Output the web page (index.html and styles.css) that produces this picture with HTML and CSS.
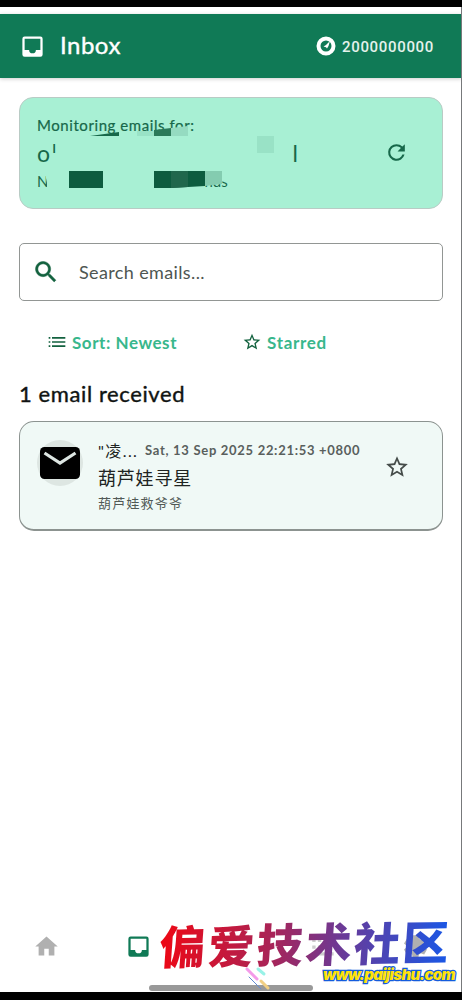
FILE: index.html
```html
<!DOCTYPE html>
<html lang="en">
<head>
<meta charset="utf-8">
<title>Inbox</title>
<link rel="stylesheet" href="styles.css">
</head>
<body>
<div class="screen">
  <header class="bar">
    <svg class="bar-icon" viewBox="0 0 24 24"><path d="M19 3H5a2 2 0 0 0-2 2v14a2 2 0 0 0 2 2h14a2 2 0 0 0 2-2V5a2 2 0 0 0-2-2zm0 12h-4a3 3 0 0 1-6 0H5V5h14z"/></svg>
    <h1 class="bar-title">Inbox</h1>
    <svg class="coin" viewBox="0 0 20 20"><circle cx="10" cy="10" r="7.500" fill="none" stroke="#fff" stroke-width="4"/><path d="M7.500 10.500l2.500-1.500 4-4-1.500 5-1.500 2.500-1-1.200z"/></svg>
    <span class="credits">2000000000</span>
  </header>
  <main class="content">
    <section class="monitor">
      <div class="monitor-text">
        <div class="m-label">Monitoring emails for:</div>
        <div class="m-mail"><span>o<sup>ı</sup></span><span class="m-end">l</span></div>
        <div class="m-note"><span>N</span><span class="m-tail">nds</span></div>
      </div>
      <svg class="refresh" viewBox="0 0 24 24"><path d="M17.650 6.350A7.960 7.960 0 0 0 12 4a8 8 0 1 0 7.730 10h-2.080A6 6 0 1 1 12 6c1.660 0 3.140.69 4.220 1.780L13 11h7V4z"/></svg>
      <svg class="mosaic" viewBox="0 0 424 112">
        <path fill="#a8f0d4" d="M26 76l2 10v5h7V74h-9zM156 78h54v6l-54 5z"/>
        <path fill="#17684a" d="M71 39l29-4v4z"/>
        <path fill="#99e2c6" d="M118 34h17v5h-17zM238 39h17v17h-17z"/>
        <path fill="#2b7959" d="M135 33l17-2v8h-17z"/>
        <path fill="#95dbc1" d="M152 31l17-2v10h-17z"/>
        <path fill="#0d5c3f" d="M50 74h34v17H50zM135 74h51v15l-34 2h-17z"/>
        <path fill="#20674c" d="M152 74h17v16l-17 1z"/>
        <path fill="#84ccb0" d="M186 74h17v13l-17 2z"/>
      </svg>
    </section>
    <div class="search">
      <svg class="search-icon" viewBox="0 0 24 24"><path d="M15.500 14h-.79l-.28-.27A6.500 6.500 0 1 0 13.730 14.430l.27.28v.79l5 4.990L20.490 19zM9.500 14a4.500 4.500 0 1 1 0-9 4.500 4.500 0 0 1 0 9z"/></svg>
      <span class="search-text">Search emails...</span>
    </div>
    <div class="filters">
      <div class="filter sort"><svg viewBox="0 0 24 24"><path d="M2 16h2v2H2zm0-5h2v2H2zm0-5h2v2H2zm4 0h16v2H6zm0 5h16v2H6zm0 5h16v2H6z"/></svg><span class="sort-text">Sort: Newest</span></div>
      <div class="filter"><svg viewBox="0 0 24 24"><path d="M22 9.240l-7.190-.62L12 2 9.190 8.630 2 9.240l5.460 4.730L5.820 21 12 17.270 18.180 21l-1.630-7.030zM12 15.400l-3.760 2.270 1-4.280-3.320-2.880 4.380-.38L12 6.100l1.710 4.040 4.380.38-3.320 2.880 1 4.280z"/></svg><span class="star-text">Starred</span></div>
    </div>
    <h2 class="count">1 email received</h2>
    <article class="email">
      <div class="avatar"><svg viewBox="0 0 40 32"><rect width="40" height="32" rx="4.500"/><path fill="none" stroke="#dde6e2" stroke-width="3.200" d="M4.500 6L20 16 35.500 6"/></svg></div>
      <div class="email-body">
        <div class="meta"><span class="from">"凌...</span><time class="date">Sat, 13 Sep 2025 22:21:53 +0800</time></div>
        <div class="subject">葫芦娃寻星</div>
        <div class="preview">葫芦娃救爷爷</div>
      </div>
      <svg class="star" viewBox="0 0 24 24"><path d="M22 9.240l-7.190-.62L12 2 9.190 8.630 2 9.240l5.460 4.730L5.820 21 12 17.270 18.180 21l-1.630-7.030zM12 15.400l-3.760 2.270 1-4.280-3.320-2.880 4.380-.38L12 6.100l1.710 4.040 4.380.38-3.320 2.880 1 4.280z"/></svg>
    </article>
  </main>
  <nav class="nav">
    <svg viewBox="0 0 24 24"><path d="M10 20v-6h4v6h5v-8h3L12 3 2 12h3v8z"/></svg>
    <svg class="active" viewBox="0 0 24 24"><path d="M19 3H5a2 2 0 0 0-2 2v14a2 2 0 0 0 2 2h14a2 2 0 0 0 2-2V5a2 2 0 0 0-2-2zm0 12h-4a3 3 0 0 1-6 0H5V5h14z"/></svg>
    <span></span>
    <svg class="pale" viewBox="0 0 24 24"><path d="M2 5h3v3H2zm5 0h3v3H7zM2 11h3v3H2zm5 0h3v3H7zM2 17h3v3H2zm5 0h14v3H7z"/></svg>
    <svg viewBox="0 0 24 24"><path d="M9.500 2h5l.6 3 1.700 1 2.900-1 2.500 4.300-2.300 2v1.400l2.300 2-2.500 4.300-2.900-1-1.700 1-.6 3h-5l-.6-3-1.700-1-2.900 1L1.800 14.700l2.300-2v-1.400l-2.300-2L4.300 5l2.900 1 1.700-1z"/></svg>
  </nav>
  <div class="home-line"></div>
  <div class="mark">偏爱技术社区</div>
  <svg class="sparks" viewBox="0 0 30 26"><g fill="none" stroke-width="3" stroke-linecap="round"><path stroke="#f49be9" d="M2 9l10 10" transform="translate(0 -6)"/><path stroke="#99f2e7" d="M13 3l6 5"/><path stroke="#f2cf83" d="M16 15l7 7"/><path stroke="#648bd3" stroke-width="1" d="M4 11l12 12"/></g></svg>
  <div class="url">www.paijishu.com</div>
</div>
</body>
</html>
```
FILE: styles.css
```css
* { box-sizing: border-box; }
body { margin: 0; background: #fff; font-family: Lato, "Noto Sans CJK SC", sans-serif; }
svg { display: block; fill: currentColor; flex: none; }
h1, h2 { margin: 0; }
.screen { position: relative; height: 1000px; border-top: 7px solid #000; border-bottom: 8px solid #000; display: flex; flex-direction: column; padding-top: 7px; overflow: hidden; }
.screen::after { content: ""; position: absolute; right: 0; top: 0; bottom: 0; width: 1px; background: #77797b; }
.bar { height: 64px; background: #107a56; color: #fff; display: flex; align-items: center; padding: 0 28px 0 19px; box-shadow: 0 1px 4px #0003; flex: none; }
.bar-icon { width: 27px; height: 27px; }
.bar-title { font-size: 24px; line-height: 28px; margin-top: -2px; font-weight: 400; letter-spacing: .5px; margin-left: 14px; flex: 1; -webkit-text-stroke: .4px; }
.coin { width: 20px; height: 20px; margin-right: 6px; }
.credits { font: 500 15px Roboto, sans-serif; letter-spacing: .67px; color: #e5f2ec; margin-top: 1px; }
.content { padding: 19px 19px 0; flex: 1; display: flex; flex-direction: column; }
.monitor { position: relative; height: 112px; background: #a8f0d4; border: 1.500px solid #b9cbc5; border-radius: 14px; color: #17684a; display: flex; align-items: center; padding: 0 33px 0 17px; }
.monitor-text { flex: 1; margin-top: -1px; }
.m-label { font-size: 15px; line-height: 20px; letter-spacing: .57px; -webkit-text-stroke: .2px; }
.m-mail { font-size: 23px; line-height: 36px; display: flex; }
.m-mail sup { font-size: 18px; line-height: 0; margin-left: 2px; }
.m-end { margin-left: 236px; }
.m-note { font-size: 15px; line-height: 20px; display: flex; }
.m-tail { margin-left: 156px; }
.refresh { width: 25px; height: 25px; margin-top: -2px; }
.mosaic { position: absolute; left: -1px; top: -1px; width: 424px; height: 112px; }
.search { height: 58px; margin-top: 34px; border: 1px solid #929694; border-radius: 5px; display: flex; align-items: center; padding-left: 12px; }
.search-icon { width: 28px; height: 28px; color: #13623f; stroke: currentColor; stroke-width: .4px; }
.search-text { margin-left: 19px; font-size: 18px; letter-spacing: .37px; color: #4e5652; }
.filters { display: flex; height: 40px; margin-top: 21px; padding-left: 28px; align-items: center; }
.filter { display: flex; align-items: center; color: #38b78c; font-size: 17px; font-weight: 700; }
.filter svg { width: 20px; height: 20px; color: #13623f; margin-right: 5px; }
.sort { width: 195px; }
.sort-text { letter-spacing: .55px; }
.star-text { letter-spacing: .7px; }
.count { margin-top: 17px; line-height: 30px; height: 42px; font-size: 22px; font-weight: 400; letter-spacing: .6px; color: #101412; -webkit-text-stroke: .4px; }
.email { height: 110px; border: 1px solid #8c9390; border-bottom-width: 2px; border-radius: 15px; background: #f0f9f6; display: flex; padding: 18px 32px 0 17px; }
.avatar { width: 46px; height: 46px; border-radius: 50%; background: #dde6e2; display: flex; align-items: center; justify-content: center; flex: none; }
.avatar svg { width: 40px; height: 32px; color: #000; }
.email-body { margin-left: 15px; flex: 1; margin-top: -2px; }
.meta { display: flex; height: 24px; align-items: center; white-space: nowrap; color: #202422; }
.from { width: 47px; font-size: 16px; letter-spacing: 1.400px; }
.date { font-size: 13px; font-weight: 700; color: #59605d; letter-spacing: .7px; }
.subject { font-size: 18px; line-height: 33px; letter-spacing: .8px; color: #202422; }
.preview { font-size: 13px; line-height: 16px; letter-spacing: 1.200px; color: #515956; }
.star { width: 26px; height: 26px; margin-top: 14px; color: #454c49; }
.nav { height: 86px; display: grid; grid-template-columns: repeat(5, 1fr); justify-items: center; align-items: center; color: #b0b0b0; margin-bottom: 3px; }
.nav svg { width: 27px; height: 27px; }
.nav .active { color: #107a56; }
.nav .pale { color: #ccc; }
.home-line { position: absolute; left: 149px; top: 978px; width: 164px; height: 6px; border-radius: 3px; background: #999; }
.mark { position: absolute; left: 160px; top: 903px; white-space: nowrap; font: 900 46px/64px "Noto Sans CJK SC", sans-serif; letter-spacing: 2.600px; background: linear-gradient(90deg, #ee0714, #a92457 38%, #663b9b 64%, #1758e8); -webkit-background-clip: text; background-clip: text; color: transparent; transform: skew(-4deg, -1deg); }
.sparks { position: absolute; left: 245px; top: 959px; width: 30px; height: 26px; }
.url { position: absolute; left: 323px; top: 957px; font: italic 900 15px/22px Inter, sans-serif; letter-spacing: -.7px; color: #ffe20a; -webkit-text-stroke: 2.500px #145cdd; paint-order: stroke fill; }
```
